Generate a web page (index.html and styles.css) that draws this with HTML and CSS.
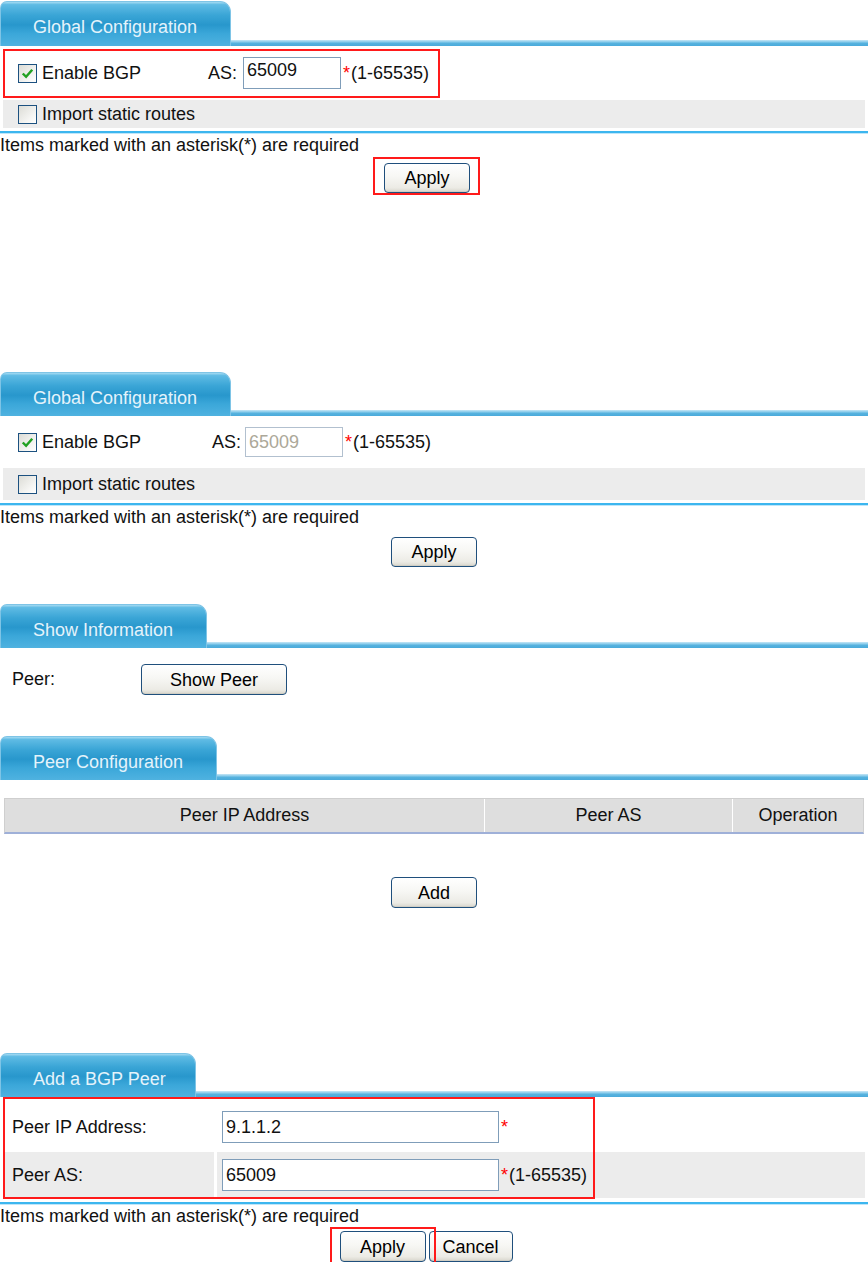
FILE: index.html
```html
<!DOCTYPE html>
<html>
<head>
<meta charset="utf-8">
<link rel="stylesheet" href="styles.css">
</head>
<body>

<section class="panel p1">
  <div class="panel-head"><div class="tab">Global Configuration</div><div class="bar"></div></div>
  <div class="form">
    <div class="frow r-tall">
      <label class="check-field"><span class="cb"><svg viewBox="0 0 18 18" width="18" height="18"><path d="M4 9 L7.5 12.5 L14 5" fill="none" stroke="#21a121" stroke-width="2.6"/></svg></span>Enable BGP</label>
      <span class="as-label">AS:</span><input class="txt txt-as" type="text" value="65009"><span class="req">*</span><span class="range">(1-65535)</span>
      <div class="hl hl-global"></div>
    </div>
    <div class="frow r-short gray">
      <label class="check-field"><span class="cb"></span>Import static routes</label>
    </div>
  </div>
  <div class="rule"></div>
  <p class="note">Items marked with an asterisk(*) are required</p>
  <div class="actions shift">
    <div class="btn-wrap"><button class="btn">Apply</button><div class="hl hl-apply1"></div></div>
  </div>
</section>

<section class="panel p2">
  <div class="panel-head"><div class="tab">Global Configuration</div><div class="bar"></div></div>
  <div class="form">
    <div class="frow r-mid">
      <label class="check-field"><span class="cb"><svg viewBox="0 0 18 18" width="18" height="18"><path d="M4 9 L7.5 12.5 L14 5" fill="none" stroke="#21a121" stroke-width="2.6"/></svg></span>Enable BGP</label>
      <span class="as-label">AS:</span><input class="txt txt-as dis" type="text" value="65009" disabled><span class="req">*</span><span class="range">(1-65535)</span>
    </div>
    <div class="frow r-gray gray">
      <label class="check-field"><span class="cb"></span>Import static routes</label>
    </div>
  </div>
  <div class="rule"></div>
  <p class="note">Items marked with an asterisk(*) are required</p>
  <div class="actions a2">
    <button class="btn">Apply</button>
  </div>
</section>

<section class="panel p3">
  <div class="panel-head"><div class="tab">Show Information</div><div class="bar"></div></div>
  <div class="peer-row">
    <span class="peer-label">Peer:</span><button class="btn btn-wide">Show Peer</button>
  </div>
</section>

<section class="panel p4">
  <div class="panel-head"><div class="tab">Peer Configuration</div><div class="bar"></div></div>
  <div class="grid-head">
    <div class="gh c1">Peer IP Address</div>
    <div class="gh c2">Peer AS</div>
    <div class="gh c3">Operation</div>
  </div>
  <div class="actions a4">
    <button class="btn">Add</button>
  </div>
</section>

<section class="panel p5">
  <div class="panel-head"><div class="tab tab-narrow">Add a BGP Peer</div><div class="bar"></div></div>
  <div class="form form5">
    <div class="prow">
      <div class="plabel">Peer IP Address:</div>
      <div class="pval"><input class="txt txt-wide" type="text" value="9.1.1.2"><span class="req">*</span></div>
    </div>
    <div class="prow gray-row">
      <div class="plabel">Peer AS:</div>
      <div class="pval"><input class="txt txt-wide" type="text" value="65009"><span class="req">*</span><span class="range">(1-65535)</span></div>
    </div>
    <div class="hl hl-peer"></div>
  </div>
  <div class="rule"></div>
  <p class="note">Items marked with an asterisk(*) are required</p>
  <div class="actions a5">
    <div class="btn-wrap"><button class="btn">Apply</button><div class="hl hl-apply5"></div></div>
    <button class="btn btn-cancel">Cancel</button>
  </div>
</section>

</body>
</html>
```

FILE: styles.css
```css
html, body {
  margin: 0;
  padding: 0;
  background: #ffffff;
}
body {
  width: 868px;
  font-family: "Liberation Sans", Arial, sans-serif;
  font-size: 18px;
  color: #111111;
}

.panel { position: relative; }
.p1 { margin-bottom: 177px; }
.p2 { margin-bottom: 35px; }
.p3 { margin-bottom: 39px; }
.p4 { margin-bottom: 143px; }

/* header tab + bar */
.panel-head {
  display: flex;
  align-items: flex-end;
  height: 46px;
}
.tab {
  height: 44px;
  padding: 7px 33px 0 32px;
  box-sizing: border-box;
  display: flex;
  align-items: center;
  color: #e4f3fb;
  white-space: nowrap;
  border: 1px solid #7ec4e6;
  border-bottom: none;
  border-radius: 7px 11px 0 0;
  background: linear-gradient(to bottom, #a5dbf2 0%, #5fbbe4 6%, #3aa5d6 30%, #2897cc 52%, #3ba7d9 72%, #4fb2e0 100%);
}
.p1 .tab { height: 45px; }
.tab-narrow { padding-right: 29px; }
.bar {
  flex: 1;
  height: 6px;
  background: linear-gradient(to bottom, #c7e6f5 0%, #8ccdec 30%, #56b2de 55%, #4aaadb 100%);
}

/* forms */
.form {
  position: relative;
  padding: 2px 3px 0 3px;
  display: flex;
  flex-direction: column;
  gap: 2px;
}
.frow {
  position: relative;
  display: flex;
  align-items: center;
  padding-left: 15px;
}
.r-tall { height: 50px; }
.r-short { height: 28px; }
.r-mid { height: 48px; }
.r-gray { height: 32px; }
.gray { background: #ececec; }

.check-field {
  display: flex;
  align-items: center;
  gap: 5px;
  width: 190px;
  white-space: nowrap;
}
.cb {
  width: 17px;
  height: 17px;
  border: 1px solid #1c5180;
  background: linear-gradient(135deg, #dcdcd6 0%, #f6f6f4 70%, #ffffff 100%);
  display: inline-flex;
  align-items: center;
  justify-content: center;
  flex: none;
}
.cb svg { display: block; width: 17px; height: 17px; }
.as-label { margin-right: 6px; }
.p2 .as-label { margin-left: 4px; margin-right: 4px; }

.txt {
  font-family: "Liberation Sans", Arial, sans-serif;
  font-size: 18px;
  color: #111111;
  border: 1px solid #7f9db9;
  background: #ffffff;
  padding: 0 3px;
  margin: 0;
  box-sizing: border-box;
  outline: none;
}
.txt-as { width: 98px; height: 32px; padding-top: 0; }
.p1 .txt-as { padding-bottom: 6px; }
.p2 .txt-as { height: 30px; }
.dis { color: #aca899; border-color: #b2c0cf; background: #ffffff; }
.req { color: #ff0000; margin: 0 1px 0 2px; }
.range { white-space: nowrap; }

.rule {
  height: 2px;
  background: #3cb6ef;
  margin-top: 3px;
  box-shadow: 0 1px 0 #bfe6f9;
}
.note {
  margin: 0;
  height: 24px;
  line-height: 24px;
}

/* buttons */
.actions {
  display: flex;
  justify-content: center;
  gap: 3px;
}
.shift { margin-top: 6px; padding-right: 14px; }
.a2 { margin-top: 8px; }
.a4 { margin-top: 43px; }
.a5 { margin-top: 3px; padding-right: 16px; }
.btn-wrap { position: relative; }
.btn {
  font-family: "Liberation Sans", Arial, sans-serif;
  font-size: 18px;
  color: #000000;
  width: 86px;
  height: 30px;
  padding: 0;
  border: 1px solid #1f4f7c;
  border-radius: 4px;
  background: linear-gradient(to bottom, #ffffff 0%, #f7f7f4 45%, #ecebe5 85%, #d8d6cc 100%);
  box-shadow: inset 0 -1px 0 #d0cec4;
  line-height: 28px;
}
.a4 .btn, .a5 .btn { height: 31px; }
.btn-wide { width: 146px; height: 31px; }
.btn-cancel { width: 84px; }

/* highlight outlines (overlays) */
.hl {
  position: absolute;
  border: 2px solid #ff1a1a;
  pointer-events: none;
}
.hl-global { left: 0; top: 1px; width: 433px; height: 45px; }
.hl-apply1 { left: -11px; top: -6px; width: 103px; height: 34px; }
.hl-apply5 { left: -10px; top: -4px; width: 102px; height: 34px; }
.hl-peer { left: 3px; top: 0; width: 588px; height: 98px; }

/* show information */
.peer-row {
  display: flex;
  align-items: center;
  padding: 16px 0 0 12px;
}
.peer-label { width: 129px; }

/* peer table header */
.grid-head {
  margin: 18px 4px 0 4px;
  display: grid;
  grid-template-columns: 479px 248px 1fr;
  height: 36px;
  background: #dedede;
  border: 1px solid #cfcfcf;
  border-bottom: 2px solid #9fb0d8;
  box-sizing: border-box;
}
.gh {
  display: flex;
  align-items: center;
  justify-content: center;
  color: #111111;
}
.c2, .c3 { border-left: 1px solid #ffffff; }

/* add peer form */
.form5 {
  padding: 6px 3px 0 3px;
  gap: 1px;
}
.prow {
  display: flex;
  gap: 3px;
  height: 48px;
}
.gray-row { height: 46px; }
.plabel {
  width: 211px;
  padding-left: 9px;
  box-sizing: border-box;
  display: flex;
  align-items: center;
}
.pval {
  flex: 1;
  display: flex;
  align-items: center;
  padding-left: 5px;
}
.gray-row .plabel, .gray-row .pval { background: #ececec; }
.txt-wide { width: 277px; height: 32px; }
.form5 + .rule { margin-top: 4px; }
```
